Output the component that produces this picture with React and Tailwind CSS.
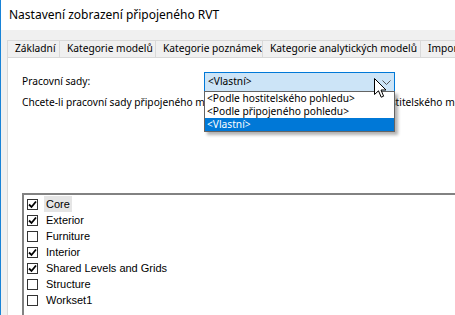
const tabs = [
  { label: "Základní", w: "w-[52px]" },
  { label: "Kategorie modelů", w: "w-[96px]" },
  { label: "Kategorie poznámek", w: "w-[107px]" },
  { label: "Kategorie analytických modelů", w: "w-[158px]" },
  { label: "Import", w: "w-[60px]" },
];

const worksets = [
  { name: "Core", checked: true, focused: true },
  { name: "Exterior", checked: true },
  { name: "Furniture", checked: false },
  { name: "Interior", checked: true },
  { name: "Shared Levels and Grids", checked: true },
  { name: "Structure", checked: false },
  { name: "Workset1", checked: false },
];

const Check = ({ checked }) => (
  <div className="w-[11px] h-[11px] border border-[#333] bg-white flex items-center justify-center shrink-0">
    {checked && (
      <svg width="9" height="9" viewBox="0 0 9 9">
        <path d="M1 4.5 L3.5 7 L8 1.5" fill="none" stroke="#000" strokeWidth="1.8" />
      </svg>
    )}
  </div>
);

const Cursor = () => (
  <svg width="13" height="21" viewBox="0 0 13 21" className="absolute left-[373px] top-[78px] z-20">
    <path
      d="M0.5 0.5 L0.5 16.5 L4.5 12.8 L7.2 19.2 L9.6 18.2 L7 12 L12 12 Z"
      fill="#fff"
      stroke="#000"
      strokeWidth="1"
    />
  </svg>
);

export default function App() {
  return (
    <div
      className="relative w-[455px] h-[315px] overflow-hidden bg-[#f0f0f0] border-l border-[#1883d7] text-[10.2px] text-black"
      style={{ fontFamily: '"Noto Sans", "Open Sans", sans-serif' }}
    >
      <div className="h-[30px] bg-white flex items-center pl-[8px] text-[12px]">
        Nastavení zobrazení připojeného RVT
      </div>

      <div className="pl-[6px] pt-[10px]">
        <div className="flex h-[17px]">
          {tabs.map((t) => (
            <div
              key={t.label}
              className={`${t.w} shrink-0 h-full border-t border-l border-[#d9d9d9] bg-[#f0f0f0] pl-[7px] flex items-center whitespace-nowrap overflow-hidden`}
            >
              {t.label}
            </div>
          ))}
        </div>

        <div className="bg-white border-l border-t border-[#d9d9d9] h-[258px] pl-[14px] pt-[14px]">
          <div className="flex items-start">
            <div className="w-[182px] h-[20px] flex items-center">Pracovní sady:</div>
            <div className="relative">
              <div className="w-[191px] h-[20px] border border-[#0078d7] bg-[#cce4f7] flex items-center pl-[3px]">
                &lt;Vlastní&gt;
                <svg width="9" height="5" viewBox="0 0 9 5" className="absolute right-[4px] top-[8px]">
                  <path d="M0.5 0.5 L4.5 4.5 L8.5 0.5" fill="none" stroke="#555" strokeWidth="1" />
                </svg>
              </div>
              <div className="absolute left-0 top-[19px] w-[191px] z-10 bg-white border border-[#646464] shadow-[3px_3px_3px_rgba(0,0,0,0.3)]">
                <div className="h-[13px] leading-[13px] pl-[2px] whitespace-nowrap">&lt;Podle hostitelského pohledu&gt;</div>
                <div className="h-[13px] leading-[13px] pl-[2px] whitespace-nowrap">&lt;Podle připojeného pohledu&gt;</div>
                <div className="h-[13px] leading-[13px] pl-[2px] bg-[#0078d7] text-white">&lt;Vlastní&gt;</div>
              </div>
            </div>
          </div>

          <div className="mt-[3px] h-[15px] leading-[15px] whitespace-nowrap">
            Chcete-li pracovní sady připojeného modelu zobrazit stejně jako nastavení hostitelského modelu
          </div>

          <div
            className="mt-[83px] border-l-2 border-t-2 border-[#828282] h-[200px] w-[500px] pt-[1px] pl-[3px] text-[11px]"
            style={{ fontFamily: '"Liberation Sans", Arial, sans-serif' }}
          >
            {worksets.map((w) => (
              <div key={w.name} className="h-[16px] flex items-center">
                <Check checked={w.checked} />
                <span
                  className={`ml-[6px] px-[2px] h-[16px] leading-[16px] ${w.focused ? "bg-[#e5e5e5]" : ""}`}
                >
                  {w.name}
                </span>
              </div>
            ))}
          </div>
        </div>
      </div>

      <Cursor />
    </div>
  );
}
